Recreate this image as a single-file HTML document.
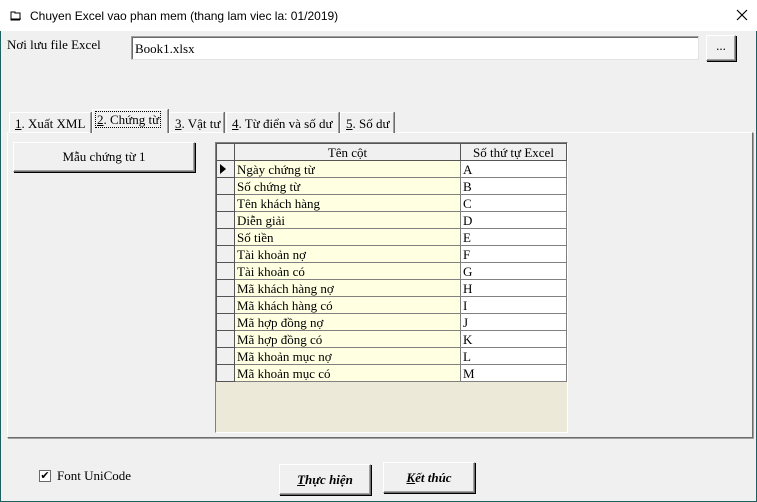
<!DOCTYPE html><html><head><meta charset="utf-8"><style>
*{box-sizing:border-box;margin:0;padding:0}
body{width:757px;height:502px;background:#f0f0f0;position:relative;overflow:hidden;font-family:"Liberation Serif",serif;font-size:13px;color:#000}
.a{position:absolute}
.title{left:0;top:0;width:757px;height:31px;background:#fff;font-family:"Liberation Sans",sans-serif;font-size:12px}
.btn{background:#f0f0f0;border:1px solid #fff;border-right-color:#6d6d6d;border-bottom-color:#6d6d6d;box-shadow:1px 1px 0 #000,inset -1px -1px 0 #a0a0a0;text-align:center}
.tab{top:112px;height:21px;border:1px solid #fff;border-bottom:none;border-right-color:#a0a0a0;box-shadow:1px 0 0 #6d6d6d;padding:3px 0 0 5px;white-space:nowrap;font-size:13px}
table{border-collapse:collapse;font-size:13px}
td{height:17px;border:1px solid #808080;padding:0 2px;line-height:15px;white-space:nowrap}
td.i{width:18px;background:#f0f0f0;border-color:#555}
td.n{background:#ffffe1;width:226px}
td.v{background:#fff;width:106px}
</style></head><body>
<div class="a" style="left:0;top:0;width:1px;height:502px;background:#1e5f5f"></div>
<div class="a" style="left:756px;top:0;width:1px;height:502px;background:#1e5f5f"></div>
<div class="a" style="left:0;top:501px;width:757px;height:1px;background:#1e5f5f"></div>
<div class="a title"><svg class="a" style="left:10px;top:10px" width="12" height="12"><path d="M1 2h4v1h5v6H1z M1 2v8h9" fill="none" stroke="#000"/><path d="M3 9h8" stroke="#000"/></svg><span class="a" style="left:30px;top:9px">Chuyen Excel vao phan mem (thang lam viec la: 01/2019)</span><svg class="a" style="left:736px;top:9px" width="12" height="12"><path d="M1 1L11 11M11 1L1 11" stroke="#000" stroke-width="1.2"/></svg></div>
<div class="a" style="left:7px;top:37px">Nơi lưu file Excel</div>
<div class="a" style="left:131px;top:36px;width:568px;height:24px;background:#fff;border:1px solid #a0a0a0;border-right-color:#e3e3e3;border-bottom-color:#e3e3e3;box-shadow:inset 1px 1px 0 #696969;padding:4px 0 0 3px">Book1.xlsx</div>
<div class="a btn" style="left:706px;top:35px;width:30px;height:26px;line-height:20px">...</div>
<div class="a" style="left:7px;top:132px;width:746px;height:306px;border:1px solid #fff;border-right-color:#6d6d6d;border-bottom-color:#6d6d6d;box-shadow:1px 1px 0 #a0a0a0"></div>
<div class="a tab" style="left:9px;width:82px"><u>1</u>. Xuất XML</div>
<div class="a tab" style="left:92px;top:109px;height:24px;width:76px;background:#f0f0f0;padding:2px 0 0 3px"><span style="outline:1px dotted #000;padding:0 1px"><u>2</u>. Chứng từ</span></div>
<div class="a tab" style="left:169px;width:55px"><u>3</u>. Vật tư</div>
<div class="a tab" style="left:226px;width:113px"><u>4</u>. Từ điển và số dư</div>
<div class="a tab" style="left:340px;width:54px"><u>5</u>. Số dư</div>
<div class="a btn" style="left:13px;top:142px;width:182px;height:30px;line-height:28px">Mẫu chứng từ 1</div>
<div class="a" style="left:215px;top:142px;width:353px;height:291px;background:#ece9d8;border:1px solid #808080;border-right-color:#fff;border-bottom-color:#fff"></div>
<table class="a" style="left:216px;top:143px">
<tr><td class="i"></td><td style="background:#f0f0f0;text-align:center;border-color:#555">Tên cột</td><td style="background:#f0f0f0;text-align:center;border-color:#555">Số thứ tự Excel</td></tr>
<tr><td class="i"><svg width="8" height="10"><path d="M1 0L7 5L1 10z"/></svg></td><td class="n">Ngày chứng từ</td><td class="v">A</td></tr>
<tr><td class="i"></td><td class="n">Số chứng từ</td><td class="v">B</td></tr>
<tr><td class="i"></td><td class="n">Tên khách hàng</td><td class="v">C</td></tr>
<tr><td class="i"></td><td class="n">Diễn giải</td><td class="v">D</td></tr>
<tr><td class="i"></td><td class="n">Số tiền</td><td class="v">E</td></tr>
<tr><td class="i"></td><td class="n">Tài khoản nợ</td><td class="v">F</td></tr>
<tr><td class="i"></td><td class="n">Tài khoản có</td><td class="v">G</td></tr>
<tr><td class="i"></td><td class="n">Mã khách hàng nợ</td><td class="v">H</td></tr>
<tr><td class="i"></td><td class="n">Mã khách hàng có</td><td class="v">I</td></tr>
<tr><td class="i"></td><td class="n">Mã hợp đồng nợ</td><td class="v">J</td></tr>
<tr><td class="i"></td><td class="n">Mã hợp đồng có</td><td class="v">K</td></tr>
<tr><td class="i"></td><td class="n">Mã khoản mục nợ</td><td class="v">L</td></tr>
<tr><td class="i"></td><td class="n">Mã khoản mục có</td><td class="v">M</td></tr>
</table>
<div class="a" style="left:39px;top:470px;width:12px;height:12px;background:#fff;border:1px solid #696969;font-size:11px;line-height:10px;text-align:center;font-family:'DejaVu Sans',sans-serif">✔</div>
<div class="a" style="left:57px;top:468px">Font UniCode</div>
<div class="a btn" style="left:279px;top:464px;width:92px;height:31px;line-height:29px;font-style:italic;font-weight:bold"><u>T</u>hực hiện</div>
<div class="a btn" style="left:383px;top:462px;width:92px;height:31px;line-height:29px;font-style:italic;font-weight:bold"><u>K</u>ết thúc</div>
</body></html>
